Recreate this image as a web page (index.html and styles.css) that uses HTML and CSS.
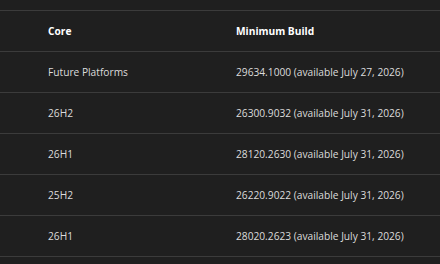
FILE: index.html
```html
<!DOCTYPE html>
<html>
<head>
<meta charset="utf-8">
<link rel="stylesheet" href="styles.css">
</head>
<body>
<div class="table">
  <div class="row head"><div class="c1">Core</div><div class="c2">Minimum Build</div></div>
  <div class="row"><div class="c1">Future Platforms</div><div class="c2">29634.1000 (available July 27, 2026)</div></div>
  <div class="row"><div class="c1">26H2</div><div class="c2">26300.9032 (available July 31, 2026)</div></div>
  <div class="row"><div class="c1">26H1</div><div class="c2">28120.2630 (available July 31, 2026)</div></div>
  <div class="row"><div class="c1">25H2</div><div class="c2">26220.9022 (available July 31, 2026)</div></div>
  <div class="row"><div class="c1">26H1</div><div class="c2">28020.2623 (available July 31, 2026)</div></div>
</div>
</body>
</html>
```
FILE: styles.css
```css
html, body {
  margin: 0;
  padding: 0;
  background: #1f1f1f;
  overflow: hidden;
}
body {
  font-family: "Open Sans", "Noto Sans", sans-serif;
  font-size: 10.2px;
  color: #dcdcdc;
}
.table {
  margin-top: 10px;
  border-top: 1px solid #3b3b3b;
}
.row {
  display: grid;
  grid-template-columns: 188px 1fr;
  height: 40px;
  align-items: center;
  border-bottom: 1px solid #3b3b3b;
  padding-left: 48px;
}
.head {
  font-weight: 700;
  color: #ffffff;
}
```
